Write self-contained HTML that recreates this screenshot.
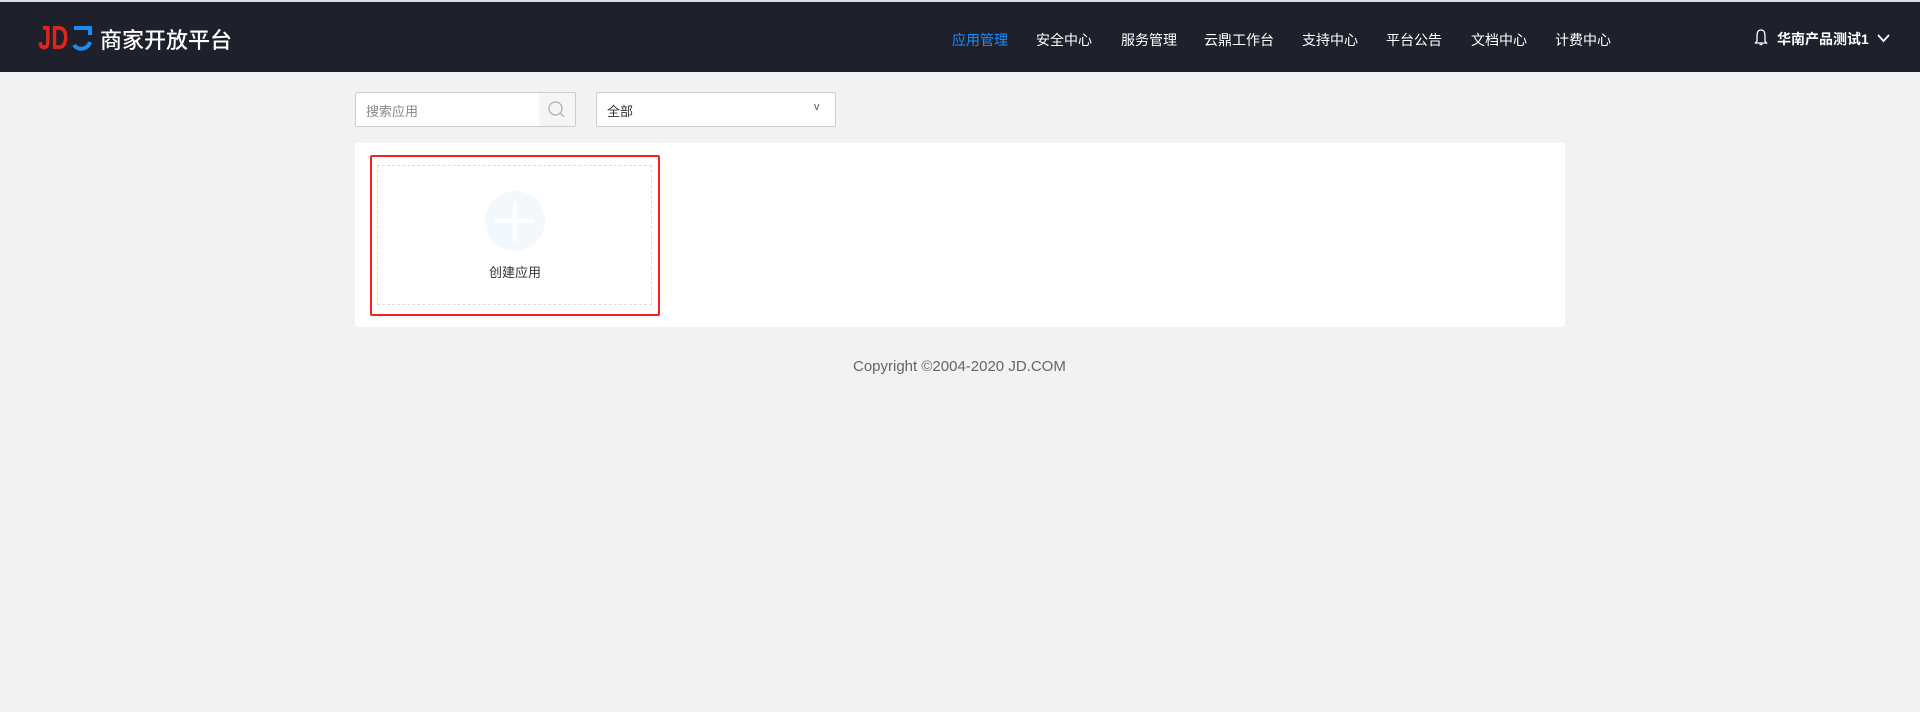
<!DOCTYPE html>
<html><head><meta charset="utf-8"><style>
*{margin:0;padding:0;box-sizing:border-box}
body{width:1920px;height:712px;background:#f2f2f2;font-family:"Liberation Sans","Noto Sans CJK SC",sans-serif;position:relative;overflow:hidden}
.hd{position:absolute;left:0;top:2px;width:1920px;height:70px;background:#1e202b}
.topline{position:absolute;left:0;top:0;width:1920px;height:2px;background:#ddd}
.abs{position:absolute;white-space:nowrap}
.nav{color:#fff;font-size:14px;top:28px}
</style></head><body>
<div class="topline"></div>
<div class="hd">
  <div class="abs" style="left:38px;top:17px;font-size:33px;color:#e1251b;transform:scaleX(0.72);transform-origin:left top;font-weight:bold;font-family:'Liberation Sans',sans-serif">JD</div>
  <svg class="abs" style="left:70px;top:23px" width="24" height="27" viewBox="0 0 24 27"><path d="M4 3 H20 V10 M20 17 A9 9 0 0 1 4 20" fill="none" stroke="#1e8bf0" stroke-width="4"/></svg>
  <div class="abs" style="left:100px;top:21px;font-size:22px;color:#fff;font-weight:500">商家开放平台</div>
  <div class="abs nav" style="left:952px;color:#1a8cff">应用管理</div>
  <div class="abs nav" style="left:1036px">安全中心</div>
  <div class="abs nav" style="left:1121px">服务管理</div>
  <div class="abs nav" style="left:1204px">云鼎工作台</div>
  <div class="abs nav" style="left:1302px">支持中心</div>
  <div class="abs nav" style="left:1386px">平台公告</div>
  <div class="abs nav" style="left:1471px">文档中心</div>
  <div class="abs nav" style="left:1555px">计费中心</div>
  <svg class="abs" style="left:1754px;top:26px" width="14" height="20" viewBox="0 0 14 20"><path d="M7 2 C3 2 3 6 3 10 V13 L1.5 15 H12.5 L11 13 V10 C11 6 11 2 7 2 Z M5.5 16.5 H8.5" fill="none" stroke="#fff" stroke-width="1.3"/></svg>
  <div class="abs" style="left:1777px;top:27px;font-size:14px;color:#fff;font-weight:bold">华南产品测试1</div>
  <svg class="abs" style="left:1877px;top:32px" width="13" height="9" viewBox="0 0 13 9"><path d="M1 1 L6.5 7 L12 1" fill="none" stroke="#fff" stroke-width="1.8"/></svg>
</div>
<div class="abs" style="left:355px;top:92px;width:221px;height:35px;background:#fff;border:1px solid #ccc;border-radius:2px"></div>
<div class="abs" style="left:539px;top:93px;width:36px;height:33px;background:#f5f5f5"></div>
<svg class="abs" style="left:547px;top:100px" width="20" height="20" viewBox="0 0 20 20"><circle cx="8.5" cy="8.5" r="6.5" fill="none" stroke="#aaa" stroke-width="1.2"/><path d="M13.5 13.5 L17 17" stroke="#aaa" stroke-width="1.2"/></svg>
<div class="abs" style="left:366px;top:101px;font-size:13px;color:#888">搜索应用</div>
<div class="abs" style="left:596px;top:92px;width:240px;height:35px;background:#fff;border:1px solid #ccc;border-radius:2px"></div>
<div class="abs" style="left:607px;top:101px;font-size:13px;color:#333">全部</div>
<div class="abs" style="left:814px;top:101px;font-size:11px;color:#555">v</div>
<div class="abs" style="left:355px;top:143px;width:1210px;height:184px;background:#fff;border-radius:3px"></div>
<div class="abs" style="left:370px;top:155px;width:290px;height:161px;border:2px solid #f5221b;border-radius:2px"></div>
<div class="abs" style="left:377px;top:165px;width:275px;height:140px;border:1px dashed #ddd"></div>
<div class="abs" style="left:485px;top:191px;width:60px;height:60px;border-radius:50%;background:#f3f8fd"></div>
<div class="abs" style="left:495px;top:219px;width:40px;height:4px;background:#fff"></div>
<div class="abs" style="left:513px;top:201px;width:4px;height:40px;background:#fff"></div>
<div class="abs" style="left:475px;top:262px;width:80px;text-align:center;font-size:13px;color:#333">创建应用</div>
<div class="abs" style="left:853px;top:358px;font-size:15px;color:#666">Copyright ©2004-2020 JD.COM</div>
</body></html>
